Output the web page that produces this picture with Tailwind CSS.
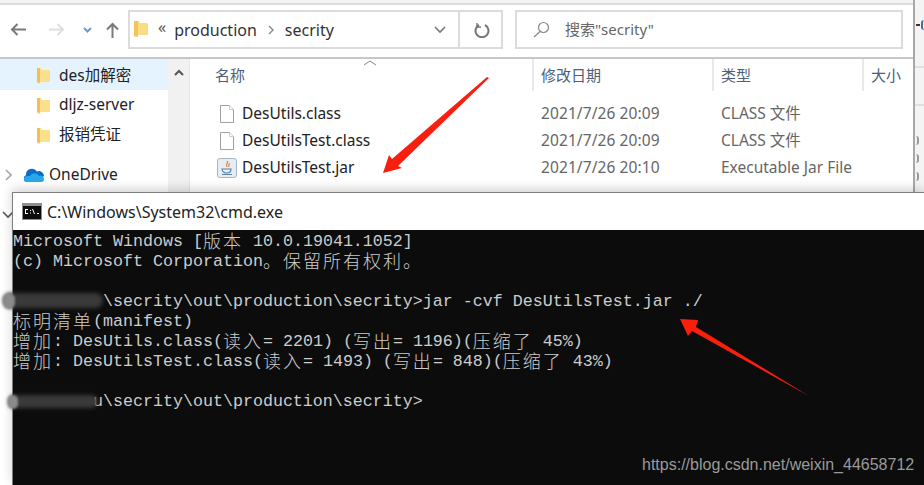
<!DOCTYPE html>
<html>
<head>
<meta charset="UTF-8">
<title>cmd jar</title>
<script src="https://cdn.jsdelivr.net/npm/@tailwindcss/browser@4"></script>
</head>
<body class="bg-white">
<div class="relative w-[924px] h-[485px] overflow-hidden flex bg-[#f4f4f4] font-['Noto_Sans','Noto_Sans_CJK_SC',sans-serif]">

  <!-- explorer window -->
  <div class="w-[915px] h-full flex flex-col bg-white shrink-0 border-r-2 border-[#a8a8a8]">
    <div class="h-[5px] bg-[#f3f3f3] border-b-2 border-[#dcdcdc] shrink-0"></div>

    <!-- toolbar -->
    <div class="h-[54px] shrink-0 flex items-center border-b-2 border-[#c4c8cc] pb-[3px]">
      <div class="w-[128px] flex items-center shrink-0">
        <svg class="ml-[10px]" width="16" height="13" viewBox="0 0 16 13" fill="none" stroke="#7a7a7a" stroke-width="2"><path d="M16 6.500H2M7.500 1L2 6.500 7.500 12"/></svg>
        <svg class="ml-[23px]" width="16" height="13" viewBox="0 0 16 13" fill="none" stroke="#dedede" stroke-width="2"><path d="M0 6.500h14M8.500 1L14 6.500 8.500 12"/></svg>
        <svg class="ml-[18px]" width="9" height="6" viewBox="0 0 9 6" fill="none" stroke="#6d9cc9" stroke-width="2"><path d="M1 1l3.500 3.500L8 1"/></svg>
        <svg class="ml-[14px]" width="13" height="16" viewBox="0 0 13 16" fill="none" stroke="#7a7a7a" stroke-width="2"><path d="M6.500 16V2M1 7.500L6.500 2 12 7.500"/></svg>
      </div>
      <div class="w-[375px] h-[39px] border-2 border-[#dcdcdc] flex items-center shrink-0">
        <svg class="ml-[4px]" width="14" height="17" viewBox="0 0 14 17"><path d="M0 0h5l1 2h7l1 1v11H2l-1 2-1-1z" fill="#fbdc83"/><path d="M0 0h4v16l-4-1z" fill="#f2c45c"/></svg>
        <span class="ml-[10px] text-[16px] leading-none text-[#555] -mt-[6px]">«</span>
        <span class="ml-[8px] text-[16px] text-[#333]">production</span>
        <svg class="ml-[11px]" width="6" height="10" viewBox="0 0 6 10" fill="none" stroke="#8a8a8a" stroke-width="1.4"><path d="M1 1l4 4-4 4"/></svg>
        <span class="ml-[11px] text-[16px] text-[#333]">secrity</span>
        <svg class="ml-auto mr-[2px]" width="12" height="8" viewBox="0 0 12 8" fill="none" stroke="#777" stroke-width="1.6"><path d="M1 1l5 5 5-5"/></svg>
        <div class="w-[43px] ml-[10px] h-full flex items-center justify-center border-l-2 border-[#dcdcdc]">
          <svg class="ml-[2px]" width="16" height="16" viewBox="0 0 16 16" fill="none" stroke="#777" stroke-width="2"><path d="M5 3a6.500 6.500 0 1 0 6 0"/><path d="M3 1v4h4" stroke-width="1.4"/></svg>
        </div>
      </div>
      <div class="ml-[12px] w-[388px] h-[39px] border-2 border-[#dcdcdc] flex items-center">
        <svg class="ml-[16px]" width="17" height="17" viewBox="0 0 17 17" fill="none" stroke="#888" stroke-width="1.2"><circle cx="10.500" cy="6.500" r="5"/><path d="M7 10.500L1 16"/></svg>
        <span class="ml-[15px] text-[15px] text-[#666]">搜索"secrity"</span>
      </div>
    </div>

    <div class="flex-1 flex min-h-0">
      <!-- nav pane -->
      <div class="w-[168px] shrink-0 text-[15.5px] text-[#222]">
        <div class="h-[31px] bg-[#e5f3ff] flex items-center pl-[37px] pt-[2px]">
          <svg width="13" height="17" viewBox="0 0 13 17"><path d="M0 1h4l1 2h8v12H4l-2 2-2-1z" fill="#fcdf8c"/><path d="M0 1h3v15l-3-1z" fill="#f0bf55"/></svg>
          <span class="ml-[9px]">des加解密</span>
        </div>
        <div class="h-[30px] flex items-center pl-[37px]">
          <svg width="13" height="17" viewBox="0 0 13 17"><path d="M0 1h4l1 2h8v12H4l-2 2-2-1z" fill="#fcdf8c"/><path d="M0 1h3v15l-3-1z" fill="#f0bf55"/></svg>
          <span class="ml-[9px]">dljz-server</span>
        </div>
        <div class="h-[30px] flex items-center pl-[37px]">
          <svg width="13" height="17" viewBox="0 0 13 17"><path d="M0 1h4l1 2h8v12H4l-2 2-2-1z" fill="#fcdf8c"/><path d="M0 1h3v15l-3-1z" fill="#f0bf55"/></svg>
          <span class="ml-[9px]">报销凭证</span>
        </div>
        <div class="h-[30px] mt-[10px] flex items-center pl-[5px]">
          <svg width="7" height="12" viewBox="0 0 7 12" fill="none" stroke="#a6a6a6" stroke-width="1.6"><path d="M1 1l5 5-5 5"/></svg>
          <svg class="ml-[12px]" width="21" height="14" viewBox="0 0 21 14"><path d="M3 14a3.500 3.500 0 0 1-1-6.800A6 6 0 0 1 13 3.500 5 5 0 0 1 20 8l-7 6z" fill="#0a6fc4"/><path d="M3 14a3 3 0 0 1 0-6l3 0a5 5 0 0 1 9 0 3 3 0 0 1 3 6z" fill="#28a8ea"/></svg>
          <span class="ml-[4px]">OneDrive</span>
        </div>
        <div class="h-[30px] mt-[10px] flex items-center pl-[2px]">
          <svg width="12" height="8" viewBox="0 0 12 8" fill="none" stroke="#555" stroke-width="1.6"><path d="M1 1l5 5 5-5"/></svg>
        </div>
      </div>

      <!-- nav scrollbar -->
      <div class="w-[22px] shrink-0 bg-[#f1f1f1] border-r border-[#e6e6e6] flex justify-center pt-[10px]">
        <svg width="10" height="7" viewBox="0 0 10 7" fill="none" stroke="#555" stroke-width="2"><path d="M1 6l4-4 4 4"/></svg>
      </div>

      <!-- file list -->
      <div class="flex-1 text-[15.5px]">
        <div class="relative grid grid-cols-[344px_180px_150px_1fr] h-[32px] text-[15px] text-[#4c607a]">
          <svg class="absolute left-[173px] top-[1px]" width="14" height="6" viewBox="0 0 14 6" fill="none" stroke="#888"><path d="M1 5l6-4 6 4"/></svg>
          <div class="flex items-center pl-[25px] pt-[1px] border-r-2 border-[#e8e8e8]">名称</div>
          <div class="flex items-center pl-[7px] pt-[1px] border-r-2 border-[#e8e8e8]">修改日期</div>
          <div class="flex items-center pl-[7px] pt-[1px] border-r-2 border-[#e8e8e8]">类型</div>
          <div class="flex items-center pl-[7px] pt-[1px]">大小</div>
        </div>
        <div class="pt-[9px]">
          <div class="grid grid-cols-[344px_180px_150px_1fr] h-[27px] items-center text-[#666]">
            <div class="flex items-center pl-[30px] text-[#222]">
              <svg width="14" height="18" viewBox="0 0 14 18" fill="#fff" stroke="#a0a0a0"><path d="M.5.5h9l4 4v13H.5z"/><path d="M9.500.5v4h4" stroke="#ccc"/></svg>
              <span class="ml-[8px]">DesUtils.class</span>
            </div>
            <div class="pl-[7px] tracking-[0.1px]">2021/7/26 20:09</div>
            <div class="pl-[7px]">CLASS 文件</div>
          </div>
          <div class="grid grid-cols-[344px_180px_150px_1fr] h-[27px] items-center text-[#666]">
            <div class="flex items-center pl-[30px] text-[#222]">
              <svg width="14" height="18" viewBox="0 0 14 18" fill="#fff" stroke="#a0a0a0"><path d="M.5.5h9l4 4v13H.5z"/><path d="M9.500.5v4h4" stroke="#ccc"/></svg>
              <span class="ml-[8px]">DesUtilsTest.class</span>
            </div>
            <div class="pl-[7px] tracking-[0.1px]">2021/7/26 20:09</div>
            <div class="pl-[7px]">CLASS 文件</div>
          </div>
          <div class="grid grid-cols-[344px_180px_150px_1fr] h-[27px] items-center text-[#666]">
            <div class="flex items-center pl-[27px] text-[#222]">
              <svg width="20" height="20" viewBox="0 0 20 20" fill="none"><rect x=".5" y=".5" width="19" height="19" rx="2.500" fill="#e6edf3" stroke="#a9b4bf"/><path d="M10 3c2 2-2 3 0 6M12 5c1 1-1 2 0 4" stroke="#e0813a" stroke-width="1.200"/><path d="M5 11h9c0 3-2 4-4 4s-5-1-5-4zM5 16.500h10" stroke="#5a82a8" stroke-width="1.200"/></svg>
              <span class="ml-[5px]">DesUtilsTest.jar</span>
            </div>
            <div class="pl-[7px] tracking-[0.1px]">2021/7/26 20:10</div>
            <div class="pl-[7px]">Executable Jar File</div>
          </div>
        </div>
      </div>
    </div>
  </div>

  <!-- window behind, sliver at right edge -->
  <div class="flex-1 flex flex-col relative overflow-hidden">
    <div class="mt-[20px] ml-[1px] flex items-center">
      <div class="w-[4px] h-[2px] bg-[#333]"></div>
      <div class="ml-[1px] w-[3px] h-[10px] rounded-l-full border-l-2 border-[#4a6d9c]"></div>
    </div>
    <div class="mt-[36px] h-[2px] bg-[#e0e0e0]"></div>
    <div class="mt-[36px] h-[2px] bg-[#e0e0e0]"></div>
    <div class="mt-[30px] flex flex-col gap-[9px] pl-[1px]">
      <div class="w-[3px] h-[9px] rounded-r-full border-r-2 border-[#999]"></div>
      <div class="w-[3px] h-[9px] rounded-r-full border-r-2 border-[#999]"></div>
      <div class="w-[3px] h-[9px] rounded-r-full border-r-2 border-[#999]"></div>
    </div>
  </div>

  <!-- cmd window -->
  <div class="absolute left-[12px] top-[192px] right-0 bottom-0 flex flex-col border-t border-l border-[#7d7d7d] shadow-[0_-3px_10px_rgba(0,0,0,0.18)]">
    <div class="h-[37px] bg-white flex items-center shrink-0">
      <svg class="ml-[9px]" width="20" height="17" viewBox="0 0 20 17">
        <rect width="20" height="17" fill="#8f8f8f"/>
        <rect x="1" y="3" width="18" height="13" fill="#0c0c0c"/>
        <path d="M3 6h3v1H4v3h2v1H3zM8 7h1v1H8zM8 9.500h1v1H8zM10 6h1l2 5h-1zM15 10h2v1h-2z" fill="#fff"/>
      </svg>
      <span class="ml-[5px] text-[16px] text-[#222]">C:\Windows\System32\cmd.exe</span>
    </div>
    <div class="flex-1 bg-[#0c0c0c] text-[#cccccc] pt-[2px] font-['Liberation_Mono','Noto_Sans_CJK_SC',monospace] text-[16.67px] leading-[20px]">
      <div class="h-[20px] flex items-center whitespace-pre">Microsoft Windows [<span class="-mt-[4px] font-['Noto_Sans_CJK_SC'] text-[18px] tracking-[2px] font-light">版本</span> 10.0.19041.1052]</div>
      <div class="h-[20px] flex items-center whitespace-pre">(c) Microsoft Corporation<span class="-mt-[4px] font-['Noto_Sans_CJK_SC'] text-[18px] tracking-[2px] font-light">。保留所有权利。</span></div>
      <div class="h-[20px]"></div>
      <div class="h-[20px] flex items-center whitespace-pre">         \secrity\out\production\secrity&gt;jar -cvf DesUtilsTest.jar ./</div>
      <div class="h-[20px] flex items-center whitespace-pre"><span class="-mt-[4px] font-['Noto_Sans_CJK_SC'] text-[18px] tracking-[2px] font-light">标明清单</span>(manifest)</div>
      <div class="h-[20px] flex items-center whitespace-pre"><span class="-mt-[4px] font-['Noto_Sans_CJK_SC'] text-[18px] tracking-[2px] font-light">增加</span>: DesUtils.class(<span class="-mt-[4px] font-['Noto_Sans_CJK_SC'] text-[18px] tracking-[2px] font-light">读入</span>= 2201) (<span class="-mt-[4px] font-['Noto_Sans_CJK_SC'] text-[18px] tracking-[2px] font-light">写出</span>= 1196)(<span class="-mt-[4px] font-['Noto_Sans_CJK_SC'] text-[18px] tracking-[2px] font-light">压缩了</span> 45%)</div>
      <div class="h-[20px] flex items-center whitespace-pre"><span class="-mt-[4px] font-['Noto_Sans_CJK_SC'] text-[18px] tracking-[2px] font-light">增加</span>: DesUtilsTest.class(<span class="-mt-[4px] font-['Noto_Sans_CJK_SC'] text-[18px] tracking-[2px] font-light">读入</span>= 1493) (<span class="-mt-[4px] font-['Noto_Sans_CJK_SC'] text-[18px] tracking-[2px] font-light">写出</span>= 848)(<span class="-mt-[4px] font-['Noto_Sans_CJK_SC'] text-[18px] tracking-[2px] font-light">压缩了</span> 43%)</div>
      <div class="h-[20px]"></div>
      <div class="h-[20px] flex items-center whitespace-pre">        u\secrity\out\production\secrity&gt;</div>
    </div>
  </div>

  <!-- redaction smudges -->
  <div class="absolute left-[3px] top-[293px] w-[100px] h-[15px] rounded-full bg-[#3a3a3a] blur-[2px]"></div>
  <div class="absolute left-[8px] top-[395px] w-[90px] h-[13px] rounded-full bg-[#3a3a3a] blur-[2px]"></div>
  <div class="absolute left-[3px] top-[293px] w-[12px] h-[16px] rounded-full bg-[#8a8a8a] blur-[1px]"></div>
  <div class="absolute left-[8px] top-[395px] w-[10px] h-[14px] rounded-full bg-[#8a8a8a] blur-[1px]"></div>

  <!-- red arrows -->
  <svg class="absolute left-0 top-0 pointer-events-none" width="924" height="485" viewBox="0 0 924 485">
    <polygon points="489,78 398,166 402,168 383,173 389,155 392,159 487,77" fill="#fa1e0e"/>
    <polygon points="809,396 696,327 698,320 680,319 688,336 692,331" fill="#fa1e0e"/>
  </svg>

  <!-- watermark -->
  <div class="absolute left-[642px] top-[456px] text-[16px] leading-[18px] text-[#9a9a9a] font-['Liberation_Sans',sans-serif]">https://blog.csdn.net/weixin_44658712</div>
</div>
</body>
</html>
